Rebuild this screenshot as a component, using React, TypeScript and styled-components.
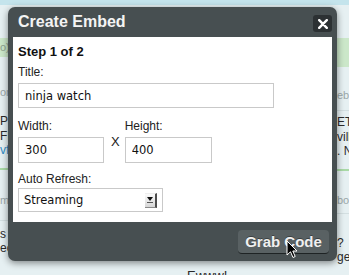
import React from "react";
import styled, { createGlobalStyle } from "styled-components";

const GlobalStyle = createGlobalStyle`
  html, body {
    margin: 0;
    padding: 0;
    background: #e3eef1;
  }
`;

const Page = styled.div`
  position: relative;
  width: 349px;
  height: 275px;
  overflow: hidden;
  background: #e6f0f2;
  font-family: "Liberation Sans", Arial, sans-serif;
`;

const TopStrip = styled.div`
  height: 5px;
  background: #c4e4ec;
`;

const Columns = styled.div`
  display: grid;
  grid-template-columns: 172px 1fr 14px;
`;

const Column = styled.div<{ $pad?: number }>`
  display: flex;
  flex-direction: column;
  overflow: hidden;
  padding-left: ${(p) => p.$pad ?? 0}px;
  white-space: nowrap;
`;

const Band = styled.div<{ $h: number }>`
  margin-top: 33px;
  height: ${(p) => p.$h}px;
  line-height: 19px;
  background: #cbe7c9;
  color: #8ea38e;
  font-size: 11px;
`;

const Meta = styled.div<{ $mt: number }>`
  margin-top: ${(p) => p.$mt}px;
  font-size: 11px;
  line-height: 14px;
  color: #9aa7a9;
`;

const Line = styled.div<{ $mt?: number; $link?: boolean }>`
  margin-top: ${(p) => p.$mt ?? 0}px;
  font-size: 12px;
  line-height: 14.5px;
  color: ${(p) => (p.$link ? "#2f8cc4" : "#2a2a2a")};
`;

const Divider = styled.div<{ $mt: number; $green?: boolean }>`
  margin-top: ${(p) => p.$mt}px;
  height: ${(p) => (p.$green ? 2 : 1)}px;
  background: ${(p) => (p.$green ? "#a9d9a6" : "#d3dfe1")};
`;

const BottomBand = styled.div<{ $mt: number }>`
  margin-top: ${(p) => p.$mt}px;
  height: 3px;
  background: #a6d8a3;
`;

const Ewww = styled.div`
  margin-top: 263px;
  font-size: 13px;
  line-height: 15px;
  color: #2a2a2a;
`;

/* dialog */

const Dialog = styled.div`
  position: absolute;
  left: 8px;
  top: 7px;
  width: 329px;
  height: 254px;
  box-sizing: border-box;
  padding: 0 5px;
  display: flex;
  flex-direction: column;
  background: #474f51;
  border-radius: 7px;
  box-shadow: 0 2px 7px rgba(0, 0, 0, 0.45);
`;

const TitleBar = styled.div`
  height: 30px;
  display: flex;
  align-items: center;
  justify-content: space-between;
  padding-left: 5px;
`;

const Title = styled.h1`
  margin: 0;
  font-size: 16px;
  font-weight: bold;
  color: #f4f4f4;
`;

const CloseButton = styled.button`
  width: 19px;
  height: 17px;
  margin-top: 3px;
  padding: 0;
  border: none;
  border-radius: 3px;
  background: #2c3133;
  display: flex;
  align-items: center;
  justify-content: center;
`;

const Panel = styled.div`
  height: 185px;
  box-sizing: border-box;
  padding: 7px 5px 0;
  background: #fff;
  display: flex;
  flex-direction: column;
  align-items: flex-start;
`;

const Step = styled.h2`
  margin: 0;
  font-size: 13px;
  line-height: 15px;
  font-weight: bold;
  color: #111;
`;

const Label = styled.label<{ $mt?: number }>`
  display: block;
  margin-top: ${(p) => p.$mt ?? 0}px;
  font-size: 12px;
  line-height: 14px;
  color: #222;
`;

const TextInput = styled.input<{ $w: number; $h: number }>`
  display: block;
  margin-top: 4px;
  width: ${(p) => p.$w}px;
  height: ${(p) => p.$h}px;
  box-sizing: border-box;
  padding: 0 6px;
  border: 1px solid #c9c9c9;
  border-radius: 0;
  outline: none;
  font-family: "DejaVu Sans", Verdana, sans-serif;
  font-size: 11.5px;
  color: #111;
  background: #fff;
`;

const SizeRow = styled.div`
  display: flex;
  margin-top: 11px;
`;

const Field = styled.div`
  display: flex;
  flex-direction: column;
`;

const Times = styled.span`
  margin: 15px 5px 0 7px;
  font-size: 13px;
  line-height: 15px;
  color: #222;
`;

const SelectBox = styled.div`
  margin-top: 2px;
  width: 145px;
  height: 24px;
  box-sizing: border-box;
  border: 1px solid #c9c9c9;
  display: flex;
  align-items: center;
`;

const Select = styled.select`
  flex: 1;
  appearance: none;
  border: none;
  outline: none;
  background: transparent;
  padding: 0 0 0 5px;
  font-family: "DejaVu Sans", Verdana, sans-serif;
  font-size: 11.5px;
  color: #111;
`;

const ArrowBox = styled.span`
  width: 12px;
  height: 15px;
  margin-right: 5px;
  box-sizing: border-box;
  background: linear-gradient(#fbfbfb, #d6d6d6);
  border-right: 2px solid #4d4d4d;
  border-bottom: 1px solid #8a8a8a;
  border-top: 1px solid #eee;
  display: flex;
  justify-content: center;
  padding-top: 3px;
`;

const Footer = styled.div`
  flex: 1;
  display: flex;
  justify-content: flex-end;
  align-items: flex-start;
  padding: 8px 3px 0 0;
`;

const GrabButton = styled.button`
  width: 91px;
  height: 24px;
  padding: 0;
  border: none;
  border-bottom: 1px solid #1e2324;
  border-radius: 4px;
  background: #596163;
  color: #f0f0f0;
  font-family: "Liberation Sans", Arial, sans-serif;
  font-size: 15px;
  font-weight: bold;
  text-shadow: 0 -1px 0 rgba(0, 0, 0, 0.35);
`;

const Cursor = styled.svg`
  position: absolute;
  left: 286px;
  top: 240px;
`;

export default function App() {
  return (
    <Page>
      <GlobalStyle />
      <TopStrip />
      <Columns>
        <Column>
          <Band $h={19}>o) · 3 minutes ago from web</Band>
          <Meta $mt={28}>om twitterfeed</Meta>
          <Line $mt={15}>Photos from the big game tonight</Line>
          <Line>FIFA fans gather downtown for</Line>
          <Line $link>vfi.ly/3kd92</Line>
          <Divider $mt={10} $green />
          <Meta $mt={23}>m TweetDeck</Meta>
          <Divider $mt={13} />
          <Line $mt={6}>s so good to be back home</Line>
          <Line>ecstatic about the weekend</Line>
          <BottomBand $mt={25} />
        </Column>
        <Column $pad={15}>
          <Ewww>Ewww!</Ewww>
        </Column>
        <Column $pad={2}>
          <Band $h={29} />
          <Meta $mt={21}>eb</Meta>
          <Divider $mt={8} />
          <Line $mt={4}>ETA</Line>
          <Line>vill</Line>
          <Line>. N</Line>
          <Divider $mt={10} $green />
          <Meta $mt={22}>bo</Meta>
          <Divider $mt={6} />
          <Line $mt={22}>?</Line>
          <Line>ge</Line>
        </Column>
      </Columns>

      <Dialog>
        <TitleBar>
          <Title>Create Embed</Title>
          <CloseButton aria-label="Close">
            <svg width="10" height="10" viewBox="0 0 10 10">
              <path d="M1.2 1.2 L8.8 8.8 M8.8 1.2 L1.2 8.8" stroke="#fff" strokeWidth="2.4" strokeLinecap="round" />
            </svg>
          </CloseButton>
        </TitleBar>
        <Panel>
          <Step>Step 1 of 2</Step>
          <Label $mt={6}>Title:</Label>
          <TextInput $w={256} $h={25} defaultValue="ninja watch" />
          <SizeRow>
            <Field>
              <Label>Width:</Label>
              <TextInput $w={86} $h={26} defaultValue="300" />
            </Field>
            <Times>X</Times>
            <Field>
              <Label>Height:</Label>
              <TextInput $w={87} $h={26} defaultValue="400" />
            </Field>
          </SizeRow>
          <Label $mt={9}>Auto Refresh:</Label>
          <SelectBox>
            <Select defaultValue="streaming">
              <option value="streaming">Streaming</option>
              <option value="1min">Every minute</option>
            </Select>
            <ArrowBox>
              <svg width="6" height="6" viewBox="0 0 6 6">
                <path d="M0 0 H6 L3 4 Z" fill="#111" />
                <rect x="0" y="5" width="6" height="1" fill="#555" />
              </svg>
            </ArrowBox>
          </SelectBox>
        </Panel>
        <Footer>
          <GrabButton>Grab Code</GrabButton>
        </Footer>
      </Dialog>

      <Cursor width="12" height="19" viewBox="0 0 12 19">
        <path
          d="M1 1 L1 15 L4.5 11.8 L7 17.5 L9.2 16.5 L6.8 11 L11 11 Z"
          fill="#000"
          stroke="#fff"
          strokeWidth="1"
          strokeLinejoin="round"
        />
      </Cursor>
    </Page>
  );
}
